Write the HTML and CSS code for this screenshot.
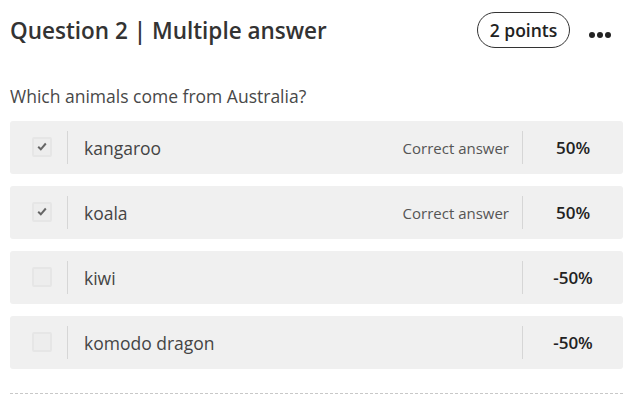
FILE: index.html
```html
<!DOCTYPE html>
<html lang="en">
<head>
  <meta charset="UTF-8">
  <title>Question 2</title>
  <link rel="stylesheet" href="styles.css">
</head>
<body>

  <div class="question">
    <div class="q-header">
      <h2>Question 2 | Multiple answer</h2>
      <div class="q-actions">
        <span class="points">2 points</span>
        <span class="more"><i></i><i></i><i></i></span>
      </div>
    </div>

    <p class="q-text">Which animals come from Australia?</p>

    <div class="answers">
      <div class="answer">
        <div class="check">
          <span class="box">
            <svg width="10" height="9" viewBox="0 0 10 9"><path d="M1.2 4.8 L3.8 7.3 L8.8 1.5" fill="none" stroke="#666" stroke-width="2"/></svg>
          </span>
        </div>
        <div class="label">kangaroo</div>
        <div class="tag">Correct answer</div>
        <div class="score">50%</div>
      </div>
      <div class="answer">
        <div class="check">
          <span class="box">
            <svg width="10" height="9" viewBox="0 0 10 9"><path d="M1.2 4.8 L3.8 7.3 L8.8 1.5" fill="none" stroke="#666" stroke-width="2"/></svg>
          </span>
        </div>
        <div class="label">koala</div>
        <div class="tag">Correct answer</div>
        <div class="score">50%</div>
      </div>
      <div class="answer">
        <div class="check"><span class="box"></span></div>
        <div class="label">kiwi</div>
        <div class="tag"></div>
        <div class="score">-50%</div>
      </div>
      <div class="answer">
        <div class="check"><span class="box"></span></div>
        <div class="label">komodo dragon</div>
        <div class="tag"></div>
        <div class="score">-50%</div>
      </div>
    </div>

    <div class="q-footer"></div>
  </div>

</body>
</html>
```

FILE: styles.css
```css
body {
  margin: 0;
  font-family: "Open Sans", "Liberation Sans", sans-serif;
  background-color: #fff;
  color: #333;
}
.question {
  padding: 12px 7px 0 10px;
}
.q-header {
  display: flex;
  justify-content: space-between;
  align-items: center;
  height: 36px;
}
.q-header h2 {
  margin: 0;
  font-size: 22.5px;
  font-weight: 600;
  color: #333;
  padding-top: 1px;
}
.q-actions {
  display: flex;
  align-items: center;
  gap: 19px;
}
.points {
  display: inline-flex;
  align-items: center;
  justify-content: center;
  width: 93px;
  height: 36px;
  border: 1.5px solid #333;
  border-radius: 18px;
  box-sizing: border-box;
  font-size: 17.5px;
  font-weight: 600;
  color: #222;
}
.more {
  display: flex;
  gap: 2px;
  margin-right: 12px;
  padding-top: 10px;
}
.more i {
  width: 6px;
  height: 6px;
  border-radius: 50%;
  background-color: #222;
}
.q-text {
  margin: 38px 0 0;
  font-size: 17.5px;
  color: #484848;
  line-height: 20px;
}
.answers {
  margin-top: 15px;
  display: flex;
  flex-direction: column;
  gap: 12px;
}
.answer {
  display: flex;
  align-items: center;
  height: 53px;
  background-color: #f0f0f0;
  border-radius: 3px;
}
.check {
  width: 58px;
  height: 33px;
  display: flex;
  align-items: center;
  padding: 0 0 2px 22px;
  border-right: 1px solid #d6d6d6;
  box-sizing: border-box;
}
.box {
  width: 20px;
  height: 20px;
  border: 2px solid #e6e6e6;
  border-radius: 2px;
  background-color: #ededed;
  display: flex;
  align-items: center;
  justify-content: center;
  box-sizing: border-box;
}
.label {
  flex: 1;
  padding-left: 16px;
  font-size: 17.5px;
  color: #444;
}
.tag {
  padding-right: 13px;
  font-size: 15px;
  color: #555;
}
.score {
  width: 100px;
  height: 33px;
  display: flex;
  align-items: center;
  justify-content: center;
  border-left: 1px solid #d6d6d6;
  font-size: 17px;
  font-weight: 600;
  color: #222;
}
.q-footer {
  margin-top: 24px;
  border-top: 1px dashed #c8c8c8;
}
```
